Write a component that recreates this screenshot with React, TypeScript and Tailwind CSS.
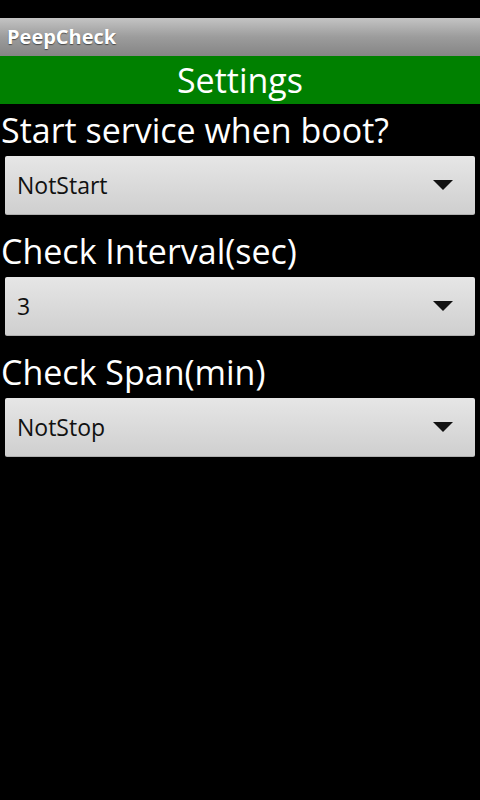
export default function App() {
  const rows = [
    { label: "Start service when boot?", value: "NotStart" },
    { label: "Check Interval(sec)", value: "3" },
    { label: "Check Span(min)", value: "NotStop" },
  ];

  return (
    <div
      className="w-[480px] h-[800px] bg-black flex flex-col"
      style={{ fontFamily: '"Open Sans", "DejaVu Sans", sans-serif' }}
    >
      {/* status bar */}
      <div className="h-[18px] bg-black" />

      {/* title bar */}
      <div className="h-[38px] flex items-center px-[7px] bg-gradient-to-b from-[#c4c4c4] via-[#9c9c9c] to-[#858585]">
        <span className="text-white font-bold text-[20px] [text-shadow:0_1px_1px_rgba(0,0,0,0.5)]">
          PeepCheck
        </span>
      </div>

      {/* header */}
      <div className="h-[48px] bg-[#008000] flex items-center justify-center">
        <span className="text-white text-[34px] leading-none">Settings</span>
      </div>

      <div className="flex flex-col">
        {rows.map((row) => (
          <div key={row.label} className="flex flex-col">
            <div className="h-[52px] flex items-center text-white text-[34px] leading-none pl-[1px]">
              {row.label}
            </div>
            <div className="mx-[5px] mb-[10px] h-[59px] rounded-[2px] bg-gradient-to-b from-[#e6e6e6] to-[#cfcfcf] border-b border-[#b0b0b0] flex items-center justify-between pl-[12px] pr-[22px]">
              <span className="text-[#111] text-[23px]">{row.value}</span>
              <svg width="20" height="10" viewBox="0 0 20 10">
                <path d="M0 0 L20 0 L10 10 Z" fill="#111" />
              </svg>
            </div>
          </div>
        ))}
      </div>
    </div>
  );
}
